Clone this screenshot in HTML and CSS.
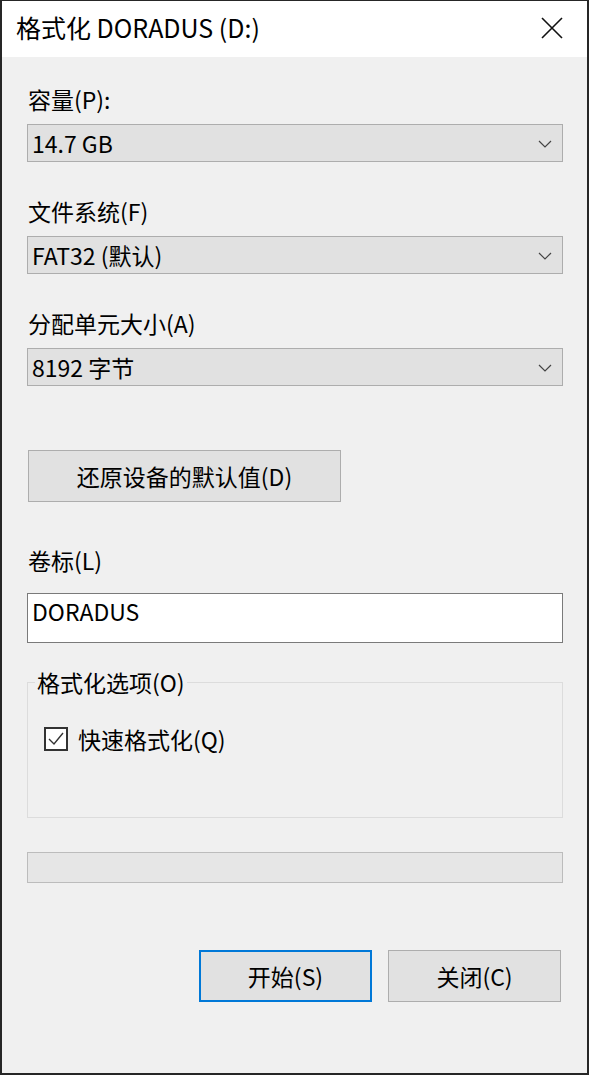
FILE: index.html
```html
<!DOCTYPE html>
<html lang="zh-CN">
<head>
<meta charset="utf-8">
<title>格式化 DORADUS (D:)</title>
<link rel="stylesheet" href="styles.css">
</head>
<body>
<div class="window">
  <div class="titlebar">
    <span class="title">格式化 DORADUS (D:)</span>
    <span class="close">
      <svg width="22" height="22" viewBox="0 0 22 22"><path d="M1 1 L21 21 M21 1 L1 21" stroke="#111" stroke-width="1.6" fill="none"/></svg>
    </span>
  </div>
  <div class="content">
    <div class="label first">容量(P):</div>
    <div class="combo"><span>14.7 GB</span><svg class="chev" width="14" height="8" viewBox="0 0 14 8"><path d="M1 1 L7 7 L13 1" stroke="#444" stroke-width="1.2" fill="none"/></svg></div>

    <div class="label">文件系统(F)</div>
    <div class="combo"><span>FAT32 (默认)</span><svg class="chev" width="14" height="8" viewBox="0 0 14 8"><path d="M1 1 L7 7 L13 1" stroke="#444" stroke-width="1.2" fill="none"/></svg></div>

    <div class="label">分配单元大小(A)</div>
    <div class="combo"><span>8192 字节</span><svg class="chev" width="14" height="8" viewBox="0 0 14 8"><path d="M1 1 L7 7 L13 1" stroke="#444" stroke-width="1.2" fill="none"/></svg></div>

    <div class="btn restore">还原设备的默认值(D)</div>

    <div class="label vol">卷标(L)</div>
    <div class="input">DORADUS</div>

    <fieldset class="group">
      <legend>格式化选项(O)</legend>
      <div class="check-row">
        <span class="checkbox"><svg width="20" height="20" viewBox="0 0 20 20"><path d="M3 10 L8 15 L17 4" stroke="#333" stroke-width="1.4" fill="none"/></svg></span>
        <span>快速格式化(Q)</span>
      </div>
    </fieldset>

    <div class="progress"></div>

    <div class="actions">
      <div class="btn primary">开始(S)</div>
      <div class="btn">关闭(C)</div>
    </div>
  </div>
</div>
</body>
</html>
```

FILE: styles.css
```css
html, body {
  margin: 0;
  padding: 0;
}
body {
  width: 589px;
  height: 1075px;
  background: #2a2a2a;
  font-family: "Noto Sans CJK SC", "Noto Sans", sans-serif;
  color: #000;
}
.window {
  box-sizing: border-box;
  width: 589px;
  height: 1075px;
  border: 2px solid #262626;
  border-top-width: 1px;
  background: #f0f0f0;
  display: flex;
  flex-direction: column;
}
.titlebar {
  height: 56px;
  background: #fff;
  display: flex;
  align-items: center;
  justify-content: space-between;
  padding: 0 24px 0 14px;
}
.title {
  font-size: 25px;
  line-height: 30px;
  margin-top: -4px;
}
.close {
  display: flex;
  margin-top: -3px;
}
.content {
  padding: 0 24px 0 25px;
  font-size: 23px;
}
.label {
  line-height: 30px;
  margin-top: 34px;
  margin-bottom: 10px;
  padding-left: 1px;
}
.label.first {
  margin-top: 27px;
}
.combo {
  box-sizing: border-box;
  height: 38px;
  background: #e1e1e1;
  border: 1px solid #adadad;
  display: flex;
  align-items: center;
  justify-content: space-between;
  padding: 0 10px 0 4px;
  line-height: 30px;
}
.chev {
  margin-top: 1px;
}
.btn {
  box-sizing: border-box;
  height: 52px;
  background: #e1e1e1;
  border: 1px solid #adadad;
  display: flex;
  align-items: center;
  justify-content: center;
  line-height: 30px;
  width: 173px;
}
.btn.restore {
  width: 313px;
  margin-top: 64px;
  margin-left: 1px;
}
.label.vol {
  margin-top: 43px;
  margin-bottom: 18px;
}
.input {
  box-sizing: border-box;
  height: 50px;
  background: #fff;
  border: 1px solid #7a7a7a;
  padding: 2px 4px 0;
  line-height: 30px;
}
.group {
  box-sizing: border-box;
  margin: 24px 0 0;
  padding: 0 16px 0;
  height: 151px;
  border: 1px solid #dcdcdc;
}
.group legend {
  padding: 0 2px;
  margin-left: -9px;
  line-height: 30px;
}
.check-row {
  display: flex;
  align-items: center;
  gap: 10px;
  margin-top: 27px;
  line-height: 30px;
}
.checkbox {
  box-sizing: border-box;
  width: 24px;
  height: 24px;
  border: 2px solid #333;
  background: #fff;
  display: flex;
  align-items: center;
  justify-content: center;
}
.progress {
  box-sizing: border-box;
  height: 31px;
  margin-top: 34px;
  background: #e6e6e6;
  border: 1px solid #bcbcbc;
}
.actions {
  display: flex;
  justify-content: flex-end;
  gap: 16px;
  margin-top: 67px;
  padding-right: 2px;
}
.btn.primary {
  border: 2px solid #0078d7;
}
```
